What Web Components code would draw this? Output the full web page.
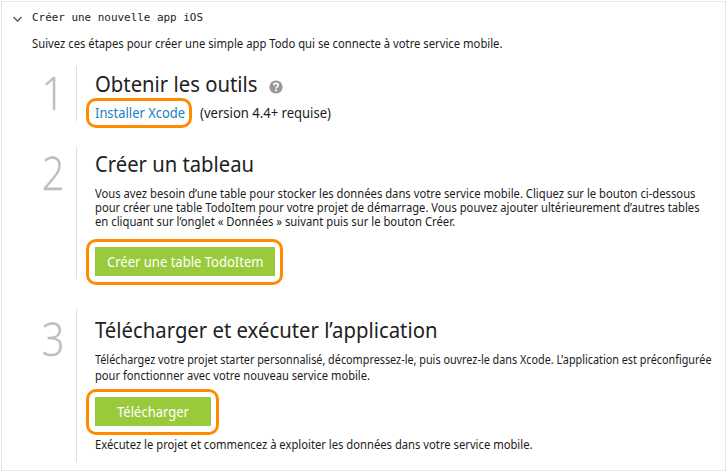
<!DOCTYPE html>
<html lang="fr">
<head>
<meta charset="utf-8">
<title>Créer une nouvelle app iOS</title>
<style>
body { margin: 0; padding: 1px; background: #fff; color: #1c1c1c; font-family: "Noto Sans", "Open Sans", sans-serif; }
p { margin: 0; }
.intro { margin: 10px 0 14px 30px; font-size: 12px; line-height: 16px; }
.copy { margin-top: 8px; font-size: 12px; line-height: 14px; }
.wide { margin-top: 7px; line-height: 16px; }
.actions { display: flex; align-items: center; gap: 8px; font-size: 14px; line-height: 24px; margin-top: -1px; }
.note { margin-top: 1px; font-size: 12px; line-height: 16px; }
</style>
</head>
<body>
<start-panel>
  <text-line slot="title" w="171">Créer une nouvelle app iOS</text-line>
  <p class="intro"><text-line w="470.5">Suivez ces étapes pour créer une simple app Todo qui se connecte à votre service mobile.</text-line></p>
  <guide-step number="1" style="height:55px;--top:3px;margin-bottom:26px">
    <text-line slot="heading" w="162.5">Obtenir les outils</text-line>
    <help-icon slot="heading"></help-icon>
    <div class="actions"><focus-frame style="--pad:0 5.5px;width:106px"><text-line w="90" style="color:#1b80bf">Installer Xcode</text-line></focus-frame><text-line w="131">(version 4.4+ requise)</text-line></div>
  </guide-step>
  <guide-step number="2" style="height:132px;--top:2px;margin-bottom:30px">
    <text-line slot="heading" w="159">Créer un tableau</text-line>
    <p class="copy">
      <text-line w="600.5">Vous avez besoin d’une table pour stocker les données dans votre service mobile. Cliquez sur le bouton ci-dessous</text-line>
      <text-line w="604.5">pour créer une table TodoItem pour votre projet de démarrage. Vous pouvez ajouter ultérieurement d’autres tables</text-line>
      <text-line w="360">en cliquant sur l’onglet « Données » suivant puis sur le bouton Créer.</text-line>
    </p>
    <focus-frame style="--pad:5px 6px 6px;width:197px;margin-top:10px"><green-button style="width:180px"><text-line w="156.5">Créer une table TodoItem</text-line></green-button></focus-frame>
  </guide-step>
  <guide-step number="3" style="height:153px;--top:6px">
    <text-line slot="heading" w="342.5">Télécharger et exécuter l’application</text-line>
    <p class="copy wide">
      <text-line w="616.5">Téléchargez votre projet starter personnalisé, décompressez-le, puis ouvrez-le dans Xcode. L’application est préconfigurée</text-line>
      <text-line w="275">pour fonctionner avec votre nouveau service mobile.</text-line>
    </p>
    <focus-frame style="--pad:5px 6px 6px;width:133px;margin-top:5px"><green-button style="width:116px"><text-line w="72">Télécharger</text-line></green-button></focus-frame>
    <p class="note" style="margin-top:2px"><text-line w="437.5">Exécutez le projet et commencez à exploiter les données dans votre service mobile.</text-line></p>
  </guide-step>
</start-panel>
<script>
function define(name, html, connected) {
  customElements.define(name, class extends HTMLElement {
    constructor() {
      super();
      this.attachShadow({ mode: "open" }).innerHTML = html;
    }
    connectedCallback() { if (connected) connected.call(this); }
  });
}

define("start-panel", `<style>
:host { display: block; box-sizing: border-box; width: 725px; height: 470px; border: 1px solid #e6e6e6; }
header { display: flex; align-items: center; padding: 8px 0 0 10px; height: 16px; gap: 9px; font: 11px/16px "DejaVu Sans Mono", monospace; color: #222; }
svg { width: 11px; height: 8px; margin-top: 1px; }
</style><header><svg viewBox="0 0 11 8"><path d="M1.5 2 5.5 6 9.5 2" fill="none" stroke="#666" stroke-width="1.6"/></svg><slot name="title"></slot></header><slot></slot>`);

define("guide-step", `<style>
:host { display: grid; grid-template-columns: 74px 1fr; grid-template-rows: minmax(0, 1fr); }
.num { box-sizing: border-box; padding: calc(var(--top) + 5px) 12px 0 0; text-align: right; font: 300 46px/36px "Open Sans", sans-serif; color: #bdbdbd; -webkit-text-stroke: .4px #bdbdbd; }
.num span { display: inline-block; transform: scaleX(.86); transform-origin: right; }
.body { min-width: 0; padding: var(--top) 0 0 18px; border-left: 1px solid #e0e0e0; box-sizing: border-box; }
h2 { margin: 0; display: flex; align-items: center; gap: 11px; font-size: 22.5px; line-height: 30px; height: 30px; font-weight: 400; color: #222; }
::slotted(.actions), ::slotted(focus-frame) { margin-left: -9px; }
</style><div class="num"><span></span></div><div class="body"><h2><slot name="heading"></slot></h2><slot></slot></div>`, function () {
  this.shadowRoot.querySelector(".num span").textContent = this.getAttribute("number");
});

define("focus-frame", `<style>
:host { display: block; box-sizing: border-box; border: 3px solid #ff8c00; border-radius: 10px; padding: var(--pad); }
</style><slot></slot>`);

define("green-button", `<style>
:host { display: flex; justify-content: center; height: 29px; background: #99ca3c; color: #fff; font-size: 14px; line-height: 30px; }
</style><slot></slot>`);

define("help-icon", `<style>
:host { display: block; width: 14px; height: 14px; margin-top: 5px; }
svg { display: block; }
</style><svg width="14" height="14" viewBox="0 0 14 14"><circle cx="7" cy="7" r="6.6" fill="#999"/><path d="M4.8 5.3C4.8 2.7 9.3 2.7 9.3 5.2 9.3 6.7 7.1 6.8 7.1 8.5" fill="none" stroke="#fff" stroke-width="1.7"/><rect x="6.2" y="9.5" width="1.8" height="1.8" fill="#fff"/></svg>`);

/* A single line condensed or widened horizontally so that it spans "w" pixels. */
define("text-line", `<style>
:host { display: block; white-space: nowrap; width: max-content; }
span { display: block; width: max-content; transform-origin: left; }
</style><span><slot></slot></span>`, function () {
  const target = parseFloat(this.getAttribute("w"));
  const inner = this.shadowRoot.querySelector("span");
  const width = inner.getBoundingClientRect().width;
  inner.style.transform = `scaleX(${target / width})`;
  this.style.width = target + "px";
});
</script>
</body>
</html>
